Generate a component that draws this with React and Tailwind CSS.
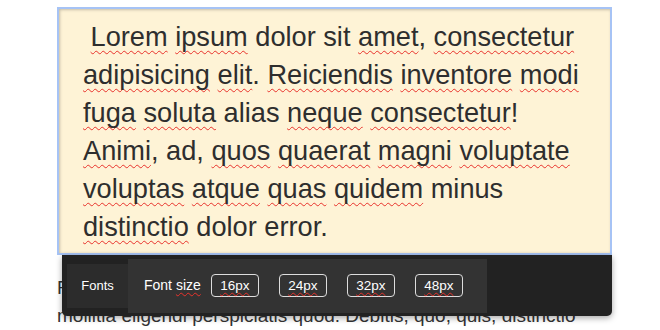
import React from "react";

const Sp = ({ children }) => (
  <span className="underline decoration-wavy decoration-[#e8322b] decoration-1 underline-offset-[4px] [text-decoration-skip-ink:none]">
    {children}
  </span>
);

const SpS = ({ children }) => (
  <span className="underline decoration-wavy decoration-[#e8322b] decoration-1 underline-offset-[2px] [text-decoration-skip-ink:none]">
    {children}
  </span>
);

export default function App() {
  return (
    <div className="w-[660px] h-[330px] overflow-hidden bg-white pt-[7px] font-['Liberation_Sans',Arial,sans-serif] text-[#333]">
      <div className="relative ml-[57px] w-[555px]">
        <div className="border-2 border-[#a6c3f5] bg-[#fef3d6] shadow-[inset_1px_1px_3px_rgba(0,0,0,0.22)] px-[24px] pt-[9px] pb-[7px] text-[27.2px] leading-[38px] text-[#2e2e2e]">
          <div className="whitespace-nowrap">
            {"\u00a0"}<Sp>Lorem</Sp> <Sp>ipsum</Sp> dolor sit <Sp>amet</Sp>, <Sp>consectetur</Sp>
          </div>
          <div className="whitespace-nowrap">
            <Sp>adipisicing</Sp> <Sp>elit</Sp>. <Sp>Reiciendis</Sp> <Sp>inventore</Sp> <Sp>modi</Sp>
          </div>
          <div className="whitespace-nowrap">
            <Sp>fuga</Sp> <Sp>soluta</Sp> alias <Sp>neque</Sp> <Sp>consectetur</Sp>!
          </div>
          <div className="whitespace-nowrap">
            <Sp>Animi</Sp>, ad, <Sp>quos</Sp> <Sp>quaerat</Sp> <Sp>magni</Sp> <Sp>voluptate</Sp>
          </div>
          <div className="whitespace-nowrap">
            <Sp>voluptas</Sp> <Sp>atque</Sp> <Sp>quas</Sp> <Sp>quidem</Sp> minus
          </div>
          <div className="whitespace-nowrap">
            <Sp>distinctio</Sp> dolor error.
          </div>
        </div>

        <div className="mt-[19px] text-[19px] leading-[28px] text-[#333]">
          <div className="whitespace-nowrap">Facilis quaerat nemo dolore aperiam sapiente ipsa et</div>
          <div className="whitespace-nowrap">mollitia eligendi perspiciatis quod. Debitis, quo, quis, distinctio</div>
        </div>

        <div className="absolute top-[248px] left-[5px] right-0 h-[61px] bg-[#222] rounded-b-[5px] shadow-[0_2px_6px_rgba(0,0,0,0.35)] flex items-center pl-[5px] text-white">
          <div className="w-[61px] h-[44px] bg-[#2c2c2c] flex items-center justify-center text-[13px]">
            Fonts
          </div>
          <div className="w-[359px] h-[54px] bg-[#333] flex items-center pl-[16px]">
            <span className="text-[14px] mr-[10px]">
              Font <SpS>size</SpS>
            </span>
            <div className="flex items-center gap-[20px]">
              {["16px", "24px", "32px", "48px"].map((s) => (
                <div
                  key={s}
                  className="w-[48px] h-[23px] border border-[#ddd] rounded-[4px] flex items-center justify-center text-[13.5px] leading-none"
                >
                  <SpS>{s}</SpS>
                </div>
              ))}
            </div>
          </div>
        </div>
      </div>
    </div>
  );
}
